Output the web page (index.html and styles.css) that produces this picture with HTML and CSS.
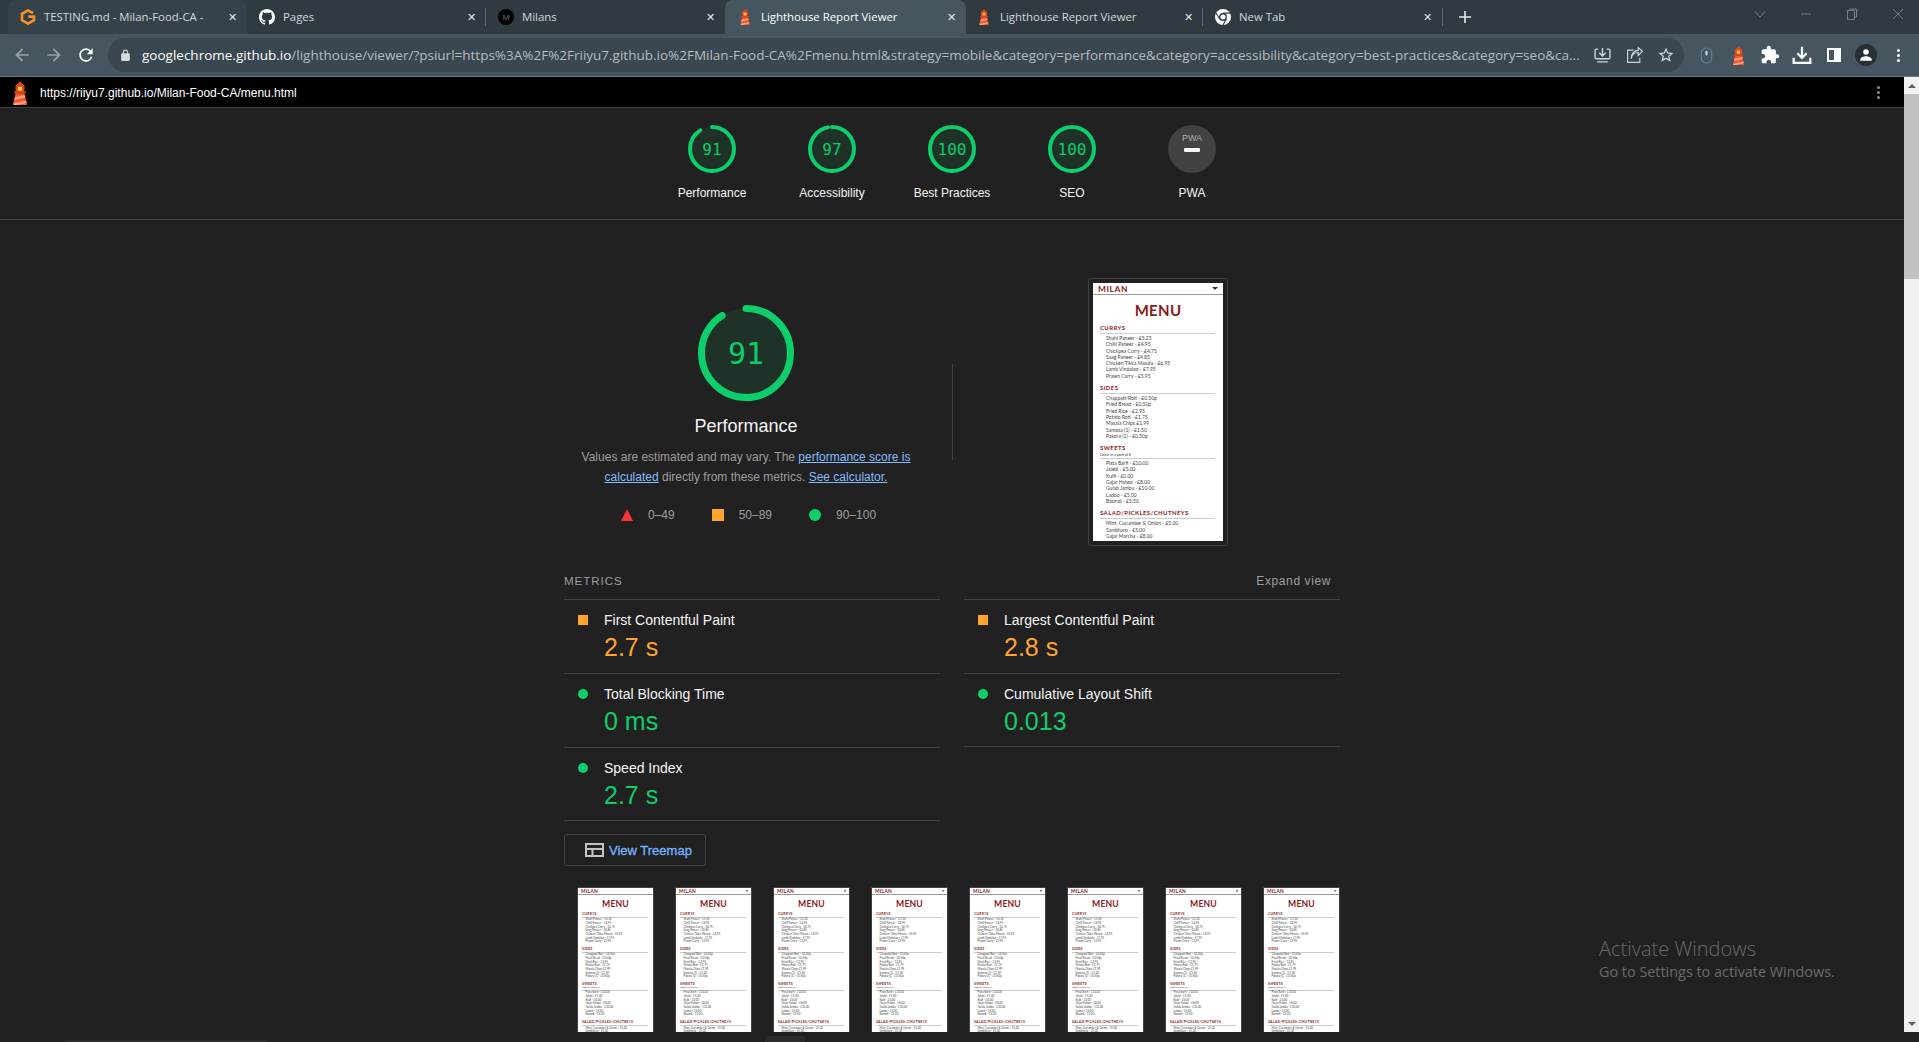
FILE: index.html
```html
<!DOCTYPE html>
<html lang="en">
<head>
    <meta charset="UTF-8">
    <title>Lighthouse Report Viewer</title>
    <link rel="stylesheet" href="styles.css">
</head>
<body>
    <svg class="defs" width="0" height="0">
        <symbol id="lighthouse" viewBox="0 0 16 24">
            <path d="M8 0.500 3.500 4.500v1h9v-1z" fill="#e8431c"/>
            <rect x="3.500" y="5" width="9" height="6" fill="#e8431c"/>
            <rect x="6" y="5.800" width="4" height="3.800" fill="#ffd54f"/>
            <rect x="2" y="10.500" width="12" height="1.800" fill="#d84315"/>
            <path d="M3.600 12.300h8.800L15 24H1z" fill="#f4582a"/>
            <path d="M2.900 16.200 12.900 13.900l.5 2.600L2.400 19zM1.500 22.300 14.300 19.700l.4 2.200L4.800 24H1.300z" fill="#ff9e7d"/>
        </symbol>
    </svg>

    <div class="tabstrip">
        <div class="tab tab-hover">
            <svg class="favicon" viewBox="0 0 16 16"><path d="M13 4.200 8 1.400 2 4.800v6.400L8 14.600l6-3.400V7.600H8.400" fill="none" stroke="#f6902b" stroke-width="2.600"/></svg>
            <span class="tab-title">TESTING.md - Milan-Food-CA -</span>
            <span class="tab-x">&#10005;</span>
        </div>
        <div class="tab">
            <svg class="favicon" viewBox="0 0 16 16"><path fill="#fff" d="M8 0C3.58 0 0 3.58 0 8c0 3.54 2.29 6.53 5.47 7.59.4.07.55-.17.55-.38 0-.19-.01-.82-.01-1.49-2.01.37-2.53-.49-2.69-.94-.09-.23-.48-.94-.82-1.13-.28-.15-.68-.52-.01-.53.63-.01 1.08.58 1.23.82.72 1.21 1.87.87 2.33.66.07-.52.28-.87.51-1.07-1.78-.2-3.64-.89-3.64-3.95 0-.87.31-1.59.82-2.15-.08-.2-.36-1.02.08-2.12 0 0 .67-.21 2.2.82.64-.18 1.32-.27 2-.27s1.36.09 2 .27c1.53-1.04 2.2-.82 2.2-.82.44 1.1.16 1.92.08 2.12.51.56.82 1.27.82 2.15 0 3.07-1.87 3.75-3.65 3.95.29.25.54.73.54 1.48 0 1.07-.01 1.93-.01 2.2 0 .21.15.46.55.38A8.013 8.013 0 0 0 16 8c0-4.42-3.58-8-8-8z"/></svg>
            <span class="tab-title">Pages</span>
            <span class="tab-x">&#10005;</span>
        </div>
        <div class="tab tab-sep">
            <span class="favicon milans-icon">M</span>
            <span class="tab-title">Milans</span>
            <span class="tab-x">&#10005;</span>
        </div>
        <div class="tab tab-active">
            <svg class="favicon"><use href="#lighthouse"/></svg>
            <span class="tab-title">Lighthouse Report Viewer</span>
            <span class="tab-x">&#10005;</span>
        </div>
        <div class="tab">
            <svg class="favicon"><use href="#lighthouse"/></svg>
            <span class="tab-title">Lighthouse Report Viewer</span>
            <span class="tab-x">&#10005;</span>
        </div>
        <div class="tab tab-sep tab-sep-end">
            <svg class="favicon" viewBox="0 0 16 16">
                <circle cx="8" cy="8" r="8" fill="#fff"/>
                <circle cx="8" cy="8" r="3.900" fill="#2f3a41"/>
                <circle cx="8" cy="8" r="2.500" fill="#fff"/>
                <path d="M8 4.100h7M4.600 10 1 4M11.400 10 8 16" stroke="#2f3a41" stroke-width="1.100"/>
            </svg>
            <span class="tab-title">New Tab</span>
            <span class="tab-x">&#10005;</span>
        </div>
        <svg class="new-tab" viewBox="0 0 14 14"><path d="M7 1v12M1 7h12" stroke="#e6e9eb" stroke-width="1.600"/></svg>
        <div class="win-controls">
            <span class="win-btn"><svg width="12" height="12" viewBox="0 0 12 12"><path d="M1 3.500 6 9l5-5.500" fill="none" stroke="#75818a"/></svg></span>
            <span class="win-btn"><svg width="12" height="12" viewBox="0 0 12 12"><path d="M1 6h10" stroke="#75818a"/></svg></span>
            <span class="win-btn"><svg width="12" height="12" viewBox="0 0 12 12"><path d="M3.500 2.500V1h7v8H9M1.500 2.500h7v9h-7z" fill="none" stroke="#75818a"/></svg></span>
            <span class="win-btn"><svg width="12" height="12" viewBox="0 0 12 12"><path d="M1 1l10 10M11 1 1 11" stroke="#75818a"/></svg></span>
        </div>
    </div>

    <div class="toolbar">
        <span class="tool"><svg class="tool-icon dim" viewBox="0 0 24 24"><path d="M20 11H7.830l5.590-5.590L12 4l-8 8 8 8 1.410-1.410L7.830 13H20v-2z"/></svg></span>
        <span class="tool"><svg class="tool-icon dim" viewBox="0 0 24 24"><path d="M4 11h12.170l-5.590-5.590L12 4l8 8-8 8-1.410-1.410L16.170 13H4v-2z"/></svg></span>
        <span class="tool"><svg class="tool-icon" viewBox="0 0 24 24"><path d="M17.650 6.350A7.958 7.958 0 0 0 12 4c-4.420 0-7.990 3.580-7.990 8s3.570 8 7.990 8c3.730 0 6.840-2.550 7.730-6h-2.080A5.990 5.990 0 0 1 12 18c-3.310 0-6-2.690-6-6s2.690-6 6-6c1.660 0 3.140.69 4.220 1.780L13 11h7V4l-2.350 2.350z"/></svg></span>
        <div class="omnibox">
            <svg class="lock" viewBox="0 0 24 24"><path d="M18 8h-1V6c0-2.760-2.240-5-5-5S7 3.240 7 6v2H6c-1.100 0-2 .9-2 2v10c0 1.100.9 2 2 2h12c1.100 0 2-.9 2-2V10c0-1.100-.9-2-2-2zM9 6c0-1.660 1.340-3 3-3s3 1.340 3 3v2H9V6z"/></svg>
            <span class="url"><b>googlechrome.github.io</b>/lighthouse/viewer/?psiurl=https%3A%2F%2Friiyu7.github.io%2FMilan-Food-CA%2Fmenu.html&amp;strategy=mobile&amp;category=performance&amp;category=accessibility&amp;category=best-practices&amp;category=seo&amp;ca...</span>
            <span class="tool"><svg class="line-icon" viewBox="0 0 16 16"><path d="M4 2H2.200C1.500 2 1 2.500 1 3.200v6.600C1 10.500 1.500 11 2.200 11h11.600c.7 0 1.200-.5 1.200-1.200V3.200C15 2.500 14.500 2 13.800 2H12M8 1v7M5 5.500 8 8.500l3-3M3 14h10" fill="none" stroke="#cfd5d9" stroke-width="1.300"/></svg></span>
            <span class="tool"><svg class="line-icon" viewBox="0 0 16 16"><path d="M7 3H1.500v11.500H13V10M5 11c.3-3.500 3-5.800 6.500-5.800V8l4-4-4-3.500v2.700C7 3.400 4.600 7 5 11z" fill="none" stroke="#cfd5d9" stroke-width="1.100"/></svg></span>
            <span class="tool"><svg class="star" viewBox="0 0 24 24"><path d="M22 9.240l-7.190-.62L12 2 9.190 8.630 2 9.240l5.460 4.730L5.820 21 12 17.270 18.180 21l-1.630-7.030L22 9.240zM12 15.400l-3.760 2.270 1-4.280-3.320-2.880 4.380-.38L12 6.100l1.710 4.040 4.380.38-3.320 2.880 1 4.280L12 15.400z"/></svg></span>
        </div>
        <div class="ext-icons">
            <span class="tool"><svg class="line-icon" viewBox="0 0 16 18"><rect x="2.500" y="1" width="11" height="16" rx="5.500" fill="none" stroke="#5f8796" stroke-width="1.200"/><rect x="6.800" y="4" width="2.400" height="5" rx="1.200" fill="#cfd5d9"/></svg></span>
            <span class="tool"><svg class="ext-lighthouse"><use href="#lighthouse"/></svg></span>
            <span class="tool"><svg class="tool-icon" viewBox="0 0 24 24"><path d="M20.500 11H19V7c0-1.100-.9-2-2-2h-4V3.500C13 2.120 11.880 1 10.500 1S8 2.120 8 3.500V5H4c-1.100 0-1.990.9-1.990 2v3.800H3.500c1.490 0 2.700 1.210 2.700 2.700s-1.210 2.700-2.700 2.700H2V20c0 1.100.9 2 2 2h3.800v-1.500c0-1.490 1.210-2.700 2.700-2.700 1.490 0 2.700 1.210 2.700 2.700V22H17c1.100 0 2-.9 2-2v-4h1.500c1.380 0 2.500-1.120 2.500-2.500S21.880 11 20.500 11z"/></svg></span>
            <span class="tool"><svg class="tool-icon" viewBox="0 0 18 18"><path d="M9 1.500v10M4.800 7.500 9 11.700l4.200-4.200M1.500 11.500v4.500h15v-4.500" fill="none" stroke="#fff" stroke-width="2"/></svg></span>
            <span class="tool"><svg class="panel-icon" viewBox="0 0 14 14"><rect width="14" height="14" fill="#fff"/><rect x="2" y="2" width="5" height="10" fill="#455661"/></svg></span>
            <span class="tool"><span class="avatar"><svg viewBox="0 0 16 16"><circle cx="8" cy="4.500" r="3.200" fill="#fff"/><path d="M1.500 14.500v-1.500c0-2.500 4.300-3.700 6.500-3.700s6.500 1.200 6.500 3.700v1.500z" fill="#fff"/></svg></span></span>
            <span class="tool"><span class="dots"><i></i><i></i><i></i></span></span>
        </div>
    </div>

    <div class="viewport">
        <div class="page">
            <div class="page-head">
                <svg class="head-logo"><use href="#lighthouse"/></svg>
                <span class="head-url">https://riiyu7.github.io/Milan-Food-CA/menu.html</span>
                <span class="dots dots-grey"><i></i><i></i><i></i></span>
            </div>

            <div class="gauges">
                <div class="gauge-item">
                    <div class="gauge">
                        <svg viewBox="0 0 48 48"><circle class="gauge-base" cx="24" cy="24" r="22"/><circle class="gauge-arc" cx="24" cy="24" r="22" pathLength="100" stroke-dasharray="91 100"/></svg>
                        <span class="gauge-num">91</span>
                    </div>
                    <div class="gauge-label">Performance</div>
                </div>
                <div class="gauge-item">
                    <div class="gauge">
                        <svg viewBox="0 0 48 48"><circle class="gauge-base" cx="24" cy="24" r="22"/><circle class="gauge-arc" cx="24" cy="24" r="22" pathLength="100" stroke-dasharray="97 100"/></svg>
                        <span class="gauge-num">97</span>
                    </div>
                    <div class="gauge-label">Accessibility</div>
                </div>
                <div class="gauge-item">
                    <div class="gauge">
                        <svg viewBox="0 0 48 48"><circle class="gauge-base" cx="24" cy="24" r="22"/><circle class="gauge-arc" cx="24" cy="24" r="22"/></svg>
                        <span class="gauge-num">100</span>
                    </div>
                    <div class="gauge-label">Best Practices</div>
                </div>
                <div class="gauge-item">
                    <div class="gauge">
                        <svg viewBox="0 0 48 48"><circle class="gauge-base" cx="24" cy="24" r="22"/><circle class="gauge-arc" cx="24" cy="24" r="22"/></svg>
                        <span class="gauge-num">100</span>
                    </div>
                    <div class="gauge-label">SEO</div>
                </div>
                <div class="gauge-item">
                    <div class="pwa-badge">
                        <span class="pwa-text">PWA</span>
                        <span class="pwa-dash"></span>
                    </div>
                    <div class="gauge-label">PWA</div>
                </div>
            </div>

            <div class="report">
                <div class="summary">
                    <div class="score-col">
                        <div class="gauge gauge-big">
                            <svg viewBox="0 0 96 96"><circle class="gauge-base" cx="48" cy="48" r="44.500"/><circle class="gauge-arc" cx="48" cy="48" r="44.500" pathLength="100" stroke-dasharray="91 100"/></svg>
                            <span class="gauge-num">91</span>
                        </div>
                        <div class="score-title">Performance</div>
                        <p class="score-desc">Values are estimated and may vary. The <a href="#">performance score is calculated</a> directly from these metrics. <a href="#">See calculator.</a></p>
                        <div class="legend">
                            <span class="legend-item"><svg class="tri" viewBox="0 0 12 12"><path d="M6 0 12 12H0z" fill="#ff3333"/></svg>0–49</span>
                            <span class="legend-item"><span class="sq"></span>50–89</span>
                            <span class="legend-item"><span class="dot"></span>90–100</span>
                        </div>
                    </div>
                    <div class="summary-rule"></div>
                    <div class="shot-col">
                        <div class="shot-frame"><div class="shot" data-caret="1"></div></div>
                    </div>
                </div>

                <div class="metrics-head">
                    <span class="metrics-title">METRICS</span>
                    <span class="expand">Expand view</span>
                </div>
                <div class="metrics">
                    <div class="metric">
                        <span class="sq"></span>
                        <div>
                            <div class="metric-name">First Contentful Paint</div>
                            <div class="metric-val orange">2.7 s</div>
                        </div>
                    </div>
                    <div class="metric">
                        <span class="sq"></span>
                        <div>
                            <div class="metric-name">Largest Contentful Paint</div>
                            <div class="metric-val orange">2.8 s</div>
                        </div>
                    </div>
                    <div class="metric">
                        <span class="dot"></span>
                        <div>
                            <div class="metric-name">Total Blocking Time</div>
                            <div class="metric-val green">0 ms</div>
                        </div>
                    </div>
                    <div class="metric metric-last">
                        <span class="dot"></span>
                        <div>
                            <div class="metric-name">Cumulative Layout Shift</div>
                            <div class="metric-val green">0.013</div>
                        </div>
                    </div>
                    <div class="metric metric-last">
                        <span class="dot"></span>
                        <div>
                            <div class="metric-name">Speed Index</div>
                            <div class="metric-val green">2.7 s</div>
                        </div>
                    </div>
                </div>

                <button class="treemap">
                    <svg viewBox="0 0 19 14"><path d="M1 1h17v12H1zM1 6h17M7.500 6v7" fill="none" stroke="#c4c4c4" stroke-width="2"/></svg>
                    View Treemap
                </button>

                <div class="filmstrip">
                    <div class="thumb"><div class="shot"></div></div>
                    <div class="thumb"><div class="shot" data-caret="1"></div></div>
                    <div class="thumb"><div class="shot" data-caret="1"></div></div>
                    <div class="thumb"><div class="shot" data-caret="1"></div></div>
                    <div class="thumb"><div class="shot" data-caret="1"></div></div>
                    <div class="thumb"><div class="shot" data-caret="1"></div></div>
                    <div class="thumb"><div class="shot" data-caret="1"></div></div>
                    <div class="thumb"><div class="shot" data-caret="1"></div></div>
                </div>
            </div>

            <div class="watermark">
                <div class="wm-title">Activate Windows</div>
                <div class="wm-sub">Go to Settings to activate Windows.</div>
            </div>
        </div>
        <div class="scrollbar">
            <span class="sb-btn"><i class="sb-up"></i></span>
            <span class="sb-thumb"></span>
            <span class="sb-track"></span>
            <span class="sb-btn"><i class="sb-down"></i></span>
        </div>
    </div>

    <div class="bottom-strip">
        <span class="strip-a"></span>
        <span class="strip-b"></span>
    </div>

    <script src="script.js"></script>
</body>
</html>
```

FILE: styles.css
```css
* { box-sizing: border-box; }
html, body { margin: 0; height: 100%; }
body { width: 1919px; height: 1042px; overflow: hidden; background: #212121; font-family: "Liberation Sans", Arial, sans-serif; display: flex; flex-direction: column; }
.defs { display: block; height: 0; }

/* browser chrome */
.tabstrip { height: 34px; flex: none; background: #2f3a41; display: flex; align-items: center; padding-left: 8px; font-family: "Open Sans", sans-serif; }
.tab { position: relative; width: 239px; height: 34px; display: flex; align-items: center; padding: 0 9px 1px 12px; color: #d3d8db; font-size: 11.4px; border-radius: 8px 8px 0 0; }
.tab-hover { background: #364249; }
.tab-active { background: #455661; color: #fff; width: 241px; margin-right: -2px; }
.tab-sep::before { content: ""; position: absolute; left: -1px; top: 8px; height: 18px; width: 1px; background: #5d6a72; }
.tab-sep-end::after { content: ""; position: absolute; right: -1px; top: 8px; height: 18px; width: 1px; background: #5d6a72; }
.favicon { width: 16px; height: 16px; flex: none; margin-right: 8px; }
.milans-icon { background: #000; color: #777; border-radius: 50%; font-size: 8px; display: flex; align-items: center; justify-content: center; }
.tab-title { flex: 1; min-width: 0; white-space: nowrap; overflow: hidden; margin-right: 8px; }
.tab-x { width: 12px; font-size: 11px; text-align: center; color: #e6e9eb; flex: none; }
.new-tab { width: 14px; height: 14px; margin-left: 16px; flex: none; }
.win-controls { margin-left: auto; margin-right: -2px; display: flex; }
.win-btn { width: 46px; height: 28px; margin-top: -6px; display: flex; align-items: center; justify-content: center; }

.toolbar { height: 43px; flex: none; background: #455661; border-bottom: 1px solid #6a7880; display: flex; align-items: center; padding-left: 6px; }
.tool { width: 32px; height: 32px; flex: none; display: flex; align-items: center; justify-content: center; }
.tool-icon { width: 20px; height: 20px; fill: #fff; }
.tool-icon.dim { fill: #98a3aa; }
.omnibox { width: 1576px; height: 34px; margin-left: 6px; background: #394750; border-radius: 17px; display: flex; align-items: center; padding: 0 2px 0 11px; }
.lock { width: 13px; height: 13px; fill: #d6dadd; flex: none; margin-right: 10px; }
.url { flex: 1; min-width: 0; white-space: nowrap; overflow: hidden; font-family: "Open Sans", sans-serif; font-size: 13.5px; color: #b4bcc1; }
.url b { font-weight: 400; color: #fff; }
.line-icon { width: 17px; height: 17px; }
.star { width: 18px; height: 18px; fill: #d8dcdf; }
.ext-icons { display: flex; margin-left: 6px; }
.ext-lighthouse { width: 13px; height: 19px; }
.panel-icon { width: 14px; height: 14px; }
.avatar { width: 22px; height: 22px; border-radius: 50%; background: #273036; display: flex; align-items: center; justify-content: center; }
.avatar svg { width: 14px; height: 14px; }
.dots { display: flex; flex-direction: column; gap: 2px; }
.dots i { width: 3px; height: 3px; border-radius: 50%; background: #fff; }
.dots-grey i { background: #8a8a8a; }

/* report page */
.viewport { height: 955px; flex: none; display: flex; }
.page { position: relative; width: 1904px; overflow: hidden; background: #212121; }
.page-head { height: 31px; background: #000; border-bottom: 1px solid #424242; display: flex; align-items: center; padding: 1px 24px 0 12px; }
.head-logo { width: 16px; height: 24px; flex: none; }
.head-url { margin-left: 12px; font-size: 12px; color: #fff; flex: 1; }

.gauges { display: flex; justify-content: center; padding: 17px 0 18px; border-bottom: 1px solid #424242; }
.gauge-item { width: 120px; display: flex; flex-direction: column; align-items: center; }
.gauge { width: 48px; height: 48px; display: grid; place-items: center; }
.gauge > * { grid-area: 1 / 1; }
.gauge svg { width: 100%; height: 100%; display: block; transform: rotate(-90deg); }
.gauge-base { fill: rgba(12, 206, 107, 0.1); stroke: none; }
.gauge-arc { fill: none; stroke: #0cce6b; stroke-width: 4; stroke-linecap: round; }
.gauge-num { font-family: "DejaVu Sans Mono", monospace; font-size: 16px; color: #0cce6b; }
.gauge-label { margin-top: 12px; font-size: 12px; line-height: 16px; color: #f5f5f5; white-space: nowrap; }
.pwa-badge { width: 48px; height: 48px; border-radius: 50%; background: #424242; display: flex; flex-direction: column; align-items: center; padding-top: 8px; }
.pwa-text { font-size: 9px; line-height: 11px; color: #b0b0b0; }
.pwa-dash { width: 16px; height: 4px; margin-top: 4px; border-radius: 1px; background: #f5f5f5; }

.report { width: 776px; margin: 0 auto; }
.summary { display: flex; padding-top: 58px; height: 326px; }
.score-col { width: 364px; display: flex; flex-direction: column; align-items: center; padding-top: 27px; }
.gauge-big { width: 96px; height: 96px; }
.gauge-big .gauge-arc { stroke-width: 7; }
.gauge-big .gauge-num { font-size: 30px; }
.score-title { margin-top: 13px; font-size: 18px; line-height: 24px; color: #f5f5f5; }
.score-desc { width: 340px; margin: 9px 0 0; font-size: 12px; line-height: 20px; text-align: center; color: #9e9e9e; }
.score-desc a { color: #82bdff; }
.legend { display: flex; margin-top: 18px; padding-left: 5px; gap: 37px; font-size: 12px; line-height: 20px; color: #9e9e9e; }
.legend-item { display: flex; align-items: center; gap: 15px; }
.tri { width: 12px; height: 12px; flex: none; }
.sq { width: 12px; height: 12px; flex: none; background: #ffa42e; }
.dot { width: 12px; height: 12px; flex: none; border-radius: 50%; background: #0cce6b; }
.summary-rule { width: 1px; height: 96px; margin: 86px 23px 0 24px; background: #424242; flex: none; }
.shot-col { width: 364px; display: flex; justify-content: center; }
.shot-frame { width: 140px; height: 268px; padding: 4px; border: 1px solid #424242; border-radius: 3px; }

/* the screenshot of the menu page, used large and in the filmstrip */
.shot { width: 130px; height: 258px; overflow: hidden; background: #fff; font-family: Lato, sans-serif; color: #333; }
.shot-head { height: 12px; display: flex; justify-content: space-between; align-items: center; padding: 0 5px; border-bottom: 1px solid #999; }
.shot-logo { font-size: 8.4px; font-weight: 700; letter-spacing: 0.6px; color: #8b1a1a; }
.shot-caret { width: 0; height: 0; border: 3px solid transparent; border-top: 3.5px solid #333; border-bottom: 0; }
.shot-h1 { margin-top: 5px; height: 20px; line-height: 20px; text-align: center; font-size: 15px; font-weight: 700; color: #8b1a1a; letter-spacing: 0.3px; }
.shot-sec { margin: 4px 8px 0 7px; padding-bottom: 1px; border-bottom: 0.6px solid #ccc; font-size: 6px; font-weight: 700; line-height: 8px; letter-spacing: 0.4px; color: #8b1a1a; }
.shot-note { font-size: 3.6px; line-height: 5px; font-weight: 400; color: #333; letter-spacing: 0; }
.shot-list { margin: 1px 0 5px; padding-left: 13px; font-size: 5px; line-height: 6.3px; white-space: nowrap; color: #444; }
.thumb .shot { width: 130px; zoom: 0.577; }

.metrics-head { display: flex; justify-content: space-between; align-items: center; height: 20px; margin-top: 25px; padding: 0 9px 0 0; font-size: 12px; color: #9e9e9e; }
.metrics-title { letter-spacing: 1px; font-size: 11.5px; }
.expand { letter-spacing: 0.6px; }
.metrics { margin-top: 8px; display: grid; grid-template-columns: 376px 376px; column-gap: 24px; align-items: start; }
.metric { height: 74px; border-top: 1px solid #424242; padding: 11px 0 0 14px; display: flex; gap: 16px; }
.metric .sq { width: 10px; height: 10px; margin-top: 4px; }
.metric .dot { width: 10px; height: 10px; margin-top: 4px; }
.metric-last { border-bottom: 1px solid #424242; }
.metric-name { font-size: 14px; line-height: 18px; color: #f5f5f5; }
.metric-val { margin-top: 4px; font-size: 25px; line-height: 28px; }
.orange { color: #ffa42e; }
.green { color: #0cce6b; }

.treemap { display: flex; align-items: center; width: 142px; height: 32px; margin-top: 13px; padding: 0 0 0 20px; gap: 5px; background: none; border: 1px solid #424242; border-radius: 3px; font-family: inherit; font-size: 13px; -webkit-text-stroke: 0.3px #74b5ff; color: #74b5ff; }
.treemap svg { width: 19px; height: 14px; flex: none; }
.filmstrip { display: flex; justify-content: space-between; margin-top: 21px; padding-left: 13px; }
.thumb { width: 77px; border: 1px solid #424242; flex: none; }

.watermark { position: absolute; left: 1599px; top: 859px; font-family: "Open Sans", sans-serif; color: #6b6b6b; }
.wm-title { font-size: 20px; line-height: 26px; font-weight: 300; }
.wm-sub { font-size: 14.4px; line-height: 20px; }

.scrollbar { width: 15px; flex: none; background: #f1f1f1; display: flex; flex-direction: column; }
.sb-btn { height: 17px; flex: none; display: flex; align-items: center; justify-content: center; }
.sb-up { border: 4px solid transparent; border-bottom: 4px solid #606060; border-top: 0; }
.sb-down { border: 4px solid transparent; border-top: 4px solid #606060; border-bottom: 0; }
.sb-thumb { height: 185px; background: #c1c1c1; flex: none; }
.sb-track { flex: 1; }

.bottom-strip { flex: 1; display: flex; align-items: flex-end; background: #212121; }
.strip-a { width: 204px; height: 2px; margin-left: 64px; background: #2c2c2c; border-radius: 3px 3px 0 0; }
.strip-b { width: 40px; height: 6px; margin-left: 497px; background: #2c2c2c; border-radius: 3px 3px 0 0; }
```

FILE: script.js
```js
// same menu page is shown large and in every filmstrip frame
const menu = [
    { title: 'CURRYS', items: ['Shahi Paneer - £5.25', 'Chilli Paneer - £4.95', 'Chickpea Curry - £4.75', 'Saag Paneer - £4.85', 'Chicken Tikka Masala - £6.95', 'Lamb Vindaloo - £7.95', 'Prawn Curry - £5.95'] },
    { title: 'SIDES', items: ['Chappati/Roti - £0.50p', 'Fried Bread - £0.50p', 'Fried Rice - £2.95', 'Potato Roti - £1.75', 'Masala Chips £1.99', 'Samosa (1) - £1.50', 'Pakora (1) - £0.50p'] },
    { title: 'SWEETS', note: 'Come in a pack of 6', items: ['Pista Barfi - £10.00', 'Jalebi - £5.00', 'Kulfi - £0.00', 'Gajar Halwa - £8.00', 'Gulab Jambu - £10.00', 'Ladoo - £5.00', 'Boondi - £5.50'] },
    { title: 'SALAD/PICKLES/CHUTNEYS', items: ['Mint, Cucumber & Onion - £5.00', 'Sambharo - £5.00', 'Gajar Marcha - £8.00'] }
];

document.querySelectorAll('.shot').forEach(shot => {
    const caret = shot.dataset.caret ? '<span class="shot-caret"></span>' : '';
    let html = `<div class="shot-head"><span class="shot-logo">MILAN</span>${caret}</div><div class="shot-h1">MENU</div>`;
    menu.forEach(sec => {
        const note = sec.note ? `<div class="shot-note">${sec.note}</div>` : '';
        const items = sec.items.map(i => `<div>${i.replace('&', '&amp;')}</div>`).join('');
        html += `<div class="shot-sec">${sec.title}${note}</div><div class="shot-list">${items}</div>`;
    });
    shot.innerHTML = html;
});
```
